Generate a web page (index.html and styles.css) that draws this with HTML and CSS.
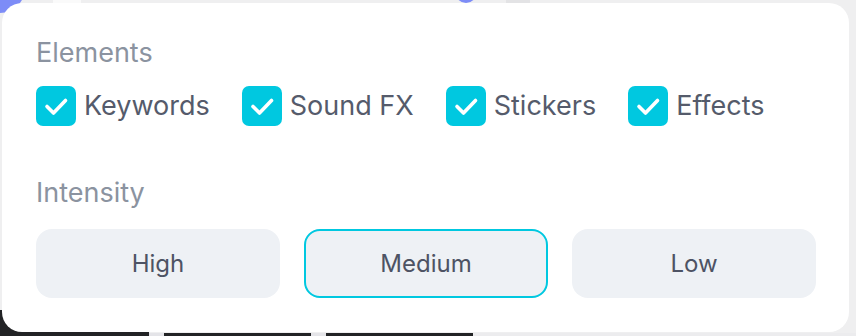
FILE: index.html
```html
<!DOCTYPE html>
<html lang="en">
<head>
<meta charset="utf-8">
<title>Settings popover</title>
<link rel="stylesheet" href="styles.css">
</head>
<body>
<div class="stage">
  <div class="bg-avatar"></div>
  <div class="bg-avatar-2"></div>
  <div class="bg-tab"></div>
  <div class="bg-white-tab"></div>
  <div class="bg-bottom">
    <span class="seg seg-a"></span>
    <span class="gap"></span>
    <span class="seg seg-b"></span>
    <span class="gap"></span>
    <span class="seg seg-c"></span>
    <span class="rest"></span>
  </div>

  <div class="card">
    <div class="label">Elements</div>
    <div class="checks">
      <label class="check">
        <span class="box"><svg viewBox="0 0 40 40" width="40" height="40"><path d="M11 20.5l6.5 6.5L29.5 14.5" fill="none" stroke="#fff" stroke-width="3.6" stroke-linecap="round" stroke-linejoin="round"/></svg></span>
        <span class="check-text">Keywords</span>
      </label>
      <label class="check">
        <span class="box"><svg viewBox="0 0 40 40" width="40" height="40"><path d="M11 20.5l6.5 6.5L29.5 14.5" fill="none" stroke="#fff" stroke-width="3.6" stroke-linecap="round" stroke-linejoin="round"/></svg></span>
        <span class="check-text">Sound FX</span>
      </label>
      <label class="check">
        <span class="box"><svg viewBox="0 0 40 40" width="40" height="40"><path d="M11 20.5l6.5 6.5L29.5 14.5" fill="none" stroke="#fff" stroke-width="3.6" stroke-linecap="round" stroke-linejoin="round"/></svg></span>
        <span class="check-text">Stickers</span>
      </label>
      <label class="check">
        <span class="box"><svg viewBox="0 0 40 40" width="40" height="40"><path d="M11 20.5l6.5 6.5L29.5 14.5" fill="none" stroke="#fff" stroke-width="3.6" stroke-linecap="round" stroke-linejoin="round"/></svg></span>
        <span class="check-text">Effects</span>
      </label>
    </div>

    <div class="label label-intensity">Intensity</div>
    <div class="options">
      <button class="opt">High</button>
      <button class="opt opt-active">Medium</button>
      <button class="opt">Low</button>
    </div>
  </div>
</div>
</body>
</html>
```

FILE: styles.css
```css
* { box-sizing: border-box; }

html, body {
  margin: 0;
  padding: 0;
}

body {
  font-family: "Inter", "Noto Sans", sans-serif;
  background: #efeff0;
}

.stage {
  position: relative;
  width: 856px;
  height: 336px;
  overflow: hidden;
  background: #efeff0;
  padding: 3px 7px 0 2px;
}

.bg-avatar {
  position: absolute;
  left: -25px;
  top: -37px;
  width: 50px;
  height: 50px;
  border-radius: 50%;
  background: #7d8cf7;
}

.bg-avatar-2 {
  position: absolute;
  left: 455px;
  top: -20px;
  width: 22px;
  height: 23px;
  border-radius: 50%;
  background: #7d8cf7;
}

.bg-tab {
  position: absolute;
  left: 506px;
  top: 0;
  width: 24px;
  height: 3px;
  background: #e3e3e5;
}

.bg-white-tab {
  position: absolute;
  left: 53px;
  top: 0;
  width: 28px;
  height: 3px;
  background: #fafafa;
}

.bg-bottom {
  position: absolute;
  left: 0;
  bottom: 0;
  width: 856px;
  height: 26px;
  display: flex;
  align-items: flex-end;
}

.bg-bottom .seg {
  display: block;
  background: #222325;
  height: 26px;
}

.bg-bottom .gap {
  display: block;
  width: 15px;
  height: 3px;
  background: #e4e4e8;
}

.bg-bottom .seg-a { width: 149px; }
.bg-bottom .seg-b { width: 147px; height: 3px; }
.bg-bottom .seg-c { width: 147px; height: 3px; }

.bg-bottom .rest {
  display: block;
  flex: 1;
  height: 3px;
  background: #ececee;
}

.card {
  position: relative;
  z-index: 1;
  width: 847px;
  height: 329px;
  background: #ffffff;
  border-radius: 20px;
  padding: 34px 33px 34px 34px;
}

.label {
  font-size: 27px;
  line-height: 32px;
  color: #8b93a0;
  font-weight: 400;
}

.checks {
  display: flex;
  align-items: center;
  gap: 32px;
  margin-top: 17px;
  height: 40px;
}

.check {
  display: flex;
  align-items: center;
  gap: 8px;
}

.box {
  width: 40px;
  height: 40px;
  border-radius: 7px;
  background: #00c8e0;
  display: flex;
}

.check-text {
  font-size: 27px;
  line-height: 40px;
  color: #555b6b;
}

.label-intensity {
  margin-top: 51px;
}

.options {
  display: flex;
  gap: 24px;
  margin-top: 20px;
}

.opt {
  width: 244px;
  height: 69px;
  border: 2px solid transparent;
  border-radius: 16px;
  background: #eef1f5;
  font-family: "Inter", "Noto Sans", sans-serif;
  font-size: 24px;
  color: #4d5364;
  padding: 0;
}

.opt-active {
  border-color: #00c8e0;
}
```
